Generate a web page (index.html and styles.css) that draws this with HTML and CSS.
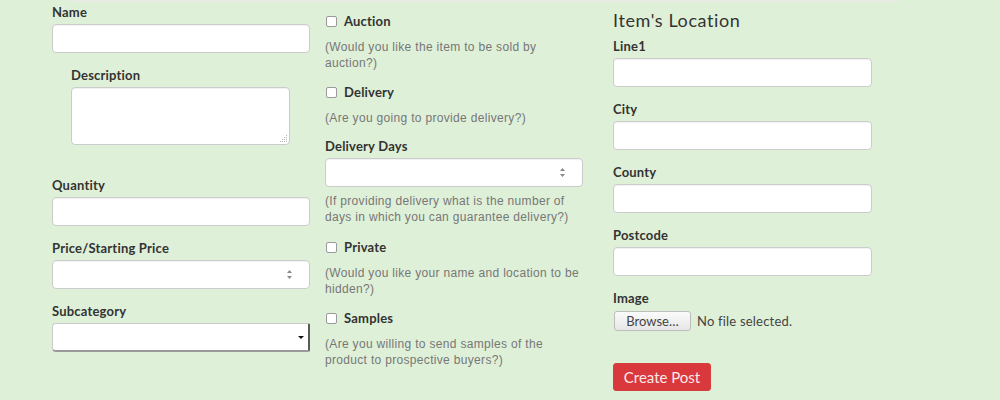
FILE: index.html
```html
<!DOCTYPE html>
<html>
<head>
<meta charset="utf-8">
<link rel="stylesheet" href="styles.css">
</head>
<body>
<div class="page">
  <div class="topline"></div>
  <form class="form">
    <div class="col col-1">
      <div class="group">
        <label class="lbl">Name</label>
        <input class="ctl" type="text">
      </div>
      <div class="group desc">
        <label class="lbl">Description</label>
        <div class="area-wrap">
          <textarea class="ctl area"></textarea>
          <svg class="grip" width="8" height="8" viewBox="0 0 8 8"><g fill="#b5b5b5"><rect x="6" y="0" width="1" height="1"/><rect x="4" y="2" width="1" height="1"/><rect x="6" y="2" width="1" height="1"/><rect x="2" y="4" width="1" height="1"/><rect x="4" y="4" width="1" height="1"/><rect x="6" y="4" width="1" height="1"/><rect x="0" y="6" width="1" height="1"/><rect x="2" y="6" width="1" height="1"/><rect x="4" y="6" width="1" height="1"/><rect x="6" y="6" width="1" height="1"/></g></svg>
        </div>
      </div>
      <div class="group">
        <label class="lbl">Quantity</label>
        <input class="ctl" type="text">
      </div>
      <div class="group">
        <label class="lbl">Price/Starting Price</label>
        <div class="num">
          <input class="ctl" type="text">
          <span class="spin"><svg width="7" height="11" viewBox="0 0 7 11"><path d="M3.5 1 L6 4 L1 4 Z M1 7 L6 7 L3.5 10 Z" fill="#8a8a8a"/></svg></span>
        </div>
      </div>
      <div class="group">
        <label class="lbl">Subcategory</label>
        <div class="select"><span class="caret"></span></div>
      </div>
    </div>

    <div class="col col-2">
      <div class="check"><span class="box"></span><span class="lbl">Auction</span></div>
      <p class="help">(Would you like the item to be sold by auction?)</p>
      <div class="check"><span class="box"></span><span class="lbl">Delivery</span></div>
      <p class="help">(Are you going to provide delivery?)</p>
      <div class="days">
        <label class="lbl">Delivery Days</label>
        <div class="num">
          <input class="ctl" type="text">
          <span class="spin"><svg width="7" height="11" viewBox="0 0 7 11"><path d="M3.5 1 L6 4 L1 4 Z M1 7 L6 7 L3.5 10 Z" fill="#8a8a8a"/></svg></span>
        </div>
        <p class="help after-input">(If providing delivery what is the number of days in which you can guarantee delivery?)</p>
      </div>
      <div class="check"><span class="box"></span><span class="lbl">Private</span></div>
      <p class="help">(Would you like your name and location to be hidden?)</p>
      <div class="check"><span class="box"></span><span class="lbl">Samples</span></div>
      <p class="help">(Are you willing to send samples of the product to prospective buyers?)</p>
    </div>

    <div class="col col-3">
      <h3 class="title">Item's Location</h3>
      <div class="group">
        <label class="lbl">Line1</label>
        <input class="ctl" type="text">
      </div>
      <div class="group">
        <label class="lbl">City</label>
        <input class="ctl" type="text">
      </div>
      <div class="group">
        <label class="lbl">County</label>
        <input class="ctl" type="text">
      </div>
      <div class="group">
        <label class="lbl">Postcode</label>
        <input class="ctl" type="text">
      </div>
      <div class="group">
        <label class="lbl">Image</label>
        <div class="file"><button type="button" class="browse">Browse…</button><span class="nofile">No file selected.</span></div>
      </div>
      <button type="button" class="submit">Create Post</button>
    </div>
  </form>
</div>
</body>
</html>
```

FILE: styles.css
```css
html, body {
  margin: 0;
  padding: 0;
  background: #dff0d8;
}
body {
  font-family: "Lato", "Liberation Sans", sans-serif;
  color: #333;
  width: 1000px;
  height: 400px;
  overflow: hidden;
}
.topline {
  margin-left: 68px;
  width: 831px;
  height: 2px;
  background: #e8eae4;
}
.form {
  display: grid;
  grid-template-columns: 258px 258px 274px;
  column-gap: 15px;
  padding-left: 52px;
  padding-top: 1px;
}
.col-3 {
  padding-left: 15px;
}
.lbl {
  display: block;
  font-size: 13px;
  font-weight: 700;
  line-height: 18px;
  letter-spacing: 0.2px;
  color: #333;
  margin-bottom: 3px;
}
.group {
  margin-bottom: 13px;
}
.ctl {
  display: block;
  box-sizing: border-box;
  width: 100%;
  height: 29px;
  margin: 0;
  border: 1px solid #cccccc;
  border-radius: 4px;
  background: #fff;
  box-shadow: inset 0 1px 1px rgba(0,0,0,0.06);
  outline: none;
  padding: 4px 10px;
  font: inherit;
}
.desc {
  margin-left: 19px;
  width: 219px;
  margin-bottom: 31px;
}
.area-wrap {
  position: relative;
}
.area {
  height: 58px;
  resize: none;
}
.grip {
  position: absolute;
  right: 2px;
  bottom: 2px;
  display: block;
}
.num {
  position: relative;
}
.spin {
  position: absolute;
  right: 17px;
  top: 9px;
  width: 7px;
  height: 11px;
  display: block;
}
.spin svg {
  display: block;
}
.select {
  position: relative;
  box-sizing: border-box;
  height: 29px;
  background: #fff;
  border: 1px solid #cccccc;
  border-right: 2px solid #5a5a5a;
  border-bottom: 2px solid #9a9a9a;
  border-radius: 4px 2px 2px 4px;
}
.caret {
  position: absolute;
  right: 4px;
  top: 12px;
  width: 0;
  height: 0;
  border-left: 3px solid transparent;
  border-right: 3px solid transparent;
  border-top: 3px solid #111;
}

/* column 2 */
.col-2 {
  padding-top: 8px;
}
.check {
  display: flex;
  align-items: center;
  height: 20px;
  margin-bottom: 8px;
}
.check .lbl {
  margin: 0;
  line-height: 20px;
}
.box {
  box-sizing: border-box;
  width: 11px;
  height: 11px;
  margin-left: 1px;
  margin-right: 7px;
  border: 1px solid #9a9a9a;
  border-radius: 2px;
  background: #fff;
}
.help {
  margin: 0 0 11px 0;
  font-family: "Liberation Sans", Arial, sans-serif;
  font-size: 12px;
  line-height: 16px;
  letter-spacing: 0.32px;
  color: #777;
}
.help.after-input {
  margin-top: 6px;
  margin-bottom: 12px;
}
.days {
  margin-top: 1px;
}

/* column 3 */
.title {
  margin: 5px 0 5px 0;
  font-size: 18px;
  font-weight: 400;
  line-height: 24px;
  letter-spacing: 0.6px;
  color: #333;
}
.file {
  display: flex;
  align-items: center;
  height: 21px;
}
.browse {
  box-sizing: border-box;
  height: 20px;
  width: 77px;
  margin: 0 6px 0 1px;
  padding: 0;
  border: 1px solid #bdbdbd;
  border-radius: 3px;
  background: linear-gradient(#fbfbfb, #e6e6e6);
  font-family: "Lato", sans-serif;
  font-size: 13px;
  color: #444;
}
.nofile {
  font-size: 13px;
  letter-spacing: 0.2px;
  color: #444;
}
.submit {
  display: block;
  margin-top: 32px;
  box-sizing: border-box;
  width: 98px;
  height: 28px;
  padding: 0;
  border: 1px solid #d43f3a;
  border-radius: 3px;
  background: #d9393c;
  color: #fde8e8;
  font-family: "Lato", sans-serif;
  font-size: 15px;
}
```
